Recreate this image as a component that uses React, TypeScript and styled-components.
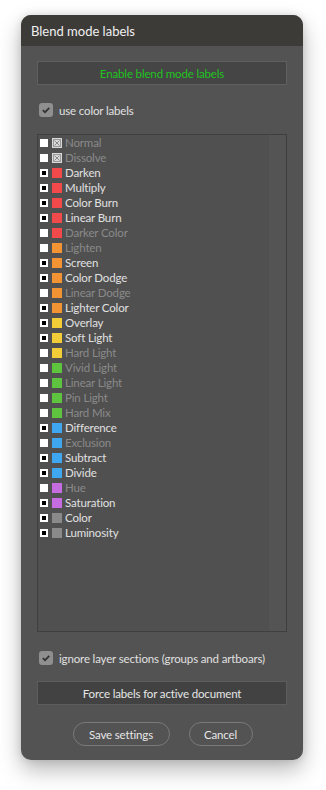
import React from "react";
import styled, { createGlobalStyle } from "styled-components";

const Global = createGlobalStyle`
  html, body { margin: 0; padding: 0; background: #ffffff; }
  body { font-family: Lato, "Open Sans", sans-serif; }
`;

const Page = styled.div`
  padding: 15px 0 30px 21px;
`;

const Dialog = styled.div`
  width: 282px;
  height: 745px;
  border-radius: 10px;
  background: #535353;
  box-shadow: 0 10px 22px rgba(0, 0, 0, 0.28), 0 0 8px rgba(0, 0, 0, 0.12);
  overflow: hidden;
  display: flex;
  flex-direction: column;
`;

const TitleBar = styled.div`
  height: 31px;
  background: #3d3b38;
  color: #f0f0f0;
  font-size: 13px;
  display: flex;
  align-items: center;
  padding-left: 10px;
  flex-shrink: 0;
`;

const Body = styled.div`
  padding: 15px 16px 0 16px;
  display: flex;
  flex-direction: column;
  white-space: nowrap;
  font-size: 11.5px;
  letter-spacing: -0.15px;
`;

const WideButton = styled.div<{ $green?: boolean; $mt?: number }>`
  height: 24px;
  margin-top: ${(p) => p.$mt ?? 0}px;
  box-sizing: border-box;
  border: 1px solid ${(p) => (p.$green ? "#5f5f5f" : "#5c5c5c")};
  background: ${(p) => (p.$green ? "#454545" : "#424242")};
  color: ${(p) => (p.$green ? "#1fc41f" : "#e6e6e6")};
  display: flex;
  align-items: center;
  justify-content: center;
`;

const CheckRow = styled.label<{ $mt: number }>`
  display: flex;
  align-items: center;
  gap: 6px;
  margin-top: ${(p) => p.$mt}px;
  margin-left: 2px;
  height: 14px;
  color: #e0e0e0;
`;

const CheckBox = styled.span`
  width: 14px;
  height: 14px;
  border-radius: 3px;
  background: #8f8f8f;
  display: flex;
  align-items: center;
  justify-content: center;
`;

const ListBox = styled.div`
  margin-top: 17px;
  height: 498px;
  box-sizing: border-box;
  border: 1px solid #3f3f3f;
  background: linear-gradient(to right, #505050 0%, #505050 93%, #545454 93%);
  padding: 0 0 0 1px;
`;

const Row = styled.div<{ $on: boolean }>`
  height: 15px;
  display: flex;
  align-items: center;
  color: ${(p) => (p.$on ? "#e0e0e0" : "#8a8a8a")};
  padding-left: 1px;
`;

const Tick = styled.span<{ $on: boolean }>`
  width: 8px;
  height: 8px;
  background: #ffffff;
  display: flex;
  align-items: center;
  justify-content: center;
  margin-right: 4px;
  &::after {
    content: "";
    width: 4px;
    height: 4px;
    background: ${(p) => (p.$on ? "#000000" : "transparent")};
  }
`;

const Swatch = styled.span<{ $c: string }>`
  width: 10px;
  height: 10px;
  background: ${(p) => p.$c};
  margin-right: 3px;
`;

const NoSwatch = styled.svg`
  width: 10px;
  height: 10px;
  margin-right: 3px;
`;

const PillRow = styled.div`
  display: flex;
  justify-content: center;
  gap: 19px;
  margin-top: 17px;
  padding-left: 1px;
`;

const Pill = styled.div<{ $w: number }>`
  width: ${(p) => p.$w}px;
  height: 24px;
  box-sizing: border-box;
  border: 1px solid #7a7a7a;
  border-radius: 12px;
  color: #e6e6e6;
  display: flex;
  align-items: center;
  justify-content: center;
`;

const RED = "#f24a4a";
const ORANGE = "#f39434";
const YELLOW = "#f3cd38";
const GREEN = "#5ec43f";
const BLUE = "#3fa7f0";
const VIOLET = "#c56ce0";
const GRAY = "#8a8a8a";

const modes: [string, string | null, boolean][] = [
  ["Normal", null, false],
  ["Dissolve", null, false],
  ["Darken", RED, true],
  ["Multiply", RED, true],
  ["Color Burn", RED, true],
  ["Linear Burn", RED, true],
  ["Darker Color", RED, false],
  ["Lighten", ORANGE, false],
  ["Screen", ORANGE, true],
  ["Color Dodge", ORANGE, true],
  ["Linear Dodge", ORANGE, false],
  ["Lighter Color", ORANGE, true],
  ["Overlay", YELLOW, true],
  ["Soft Light", YELLOW, true],
  ["Hard Light", YELLOW, false],
  ["Vivid Light", GREEN, false],
  ["Linear Light", GREEN, false],
  ["Pin Light", GREEN, false],
  ["Hard Mix", GREEN, false],
  ["Difference", BLUE, true],
  ["Exclusion", BLUE, false],
  ["Subtract", BLUE, true],
  ["Divide", BLUE, true],
  ["Hue", VIOLET, false],
  ["Saturation", VIOLET, true],
  ["Color", GRAY, true],
  ["Luminosity", GRAY, true],
];

const Check = () => (
  <CheckBox>
    <svg width="10" height="10" viewBox="0 0 10 10">
      <path d="M1.8 5.2 L4 7.2 L8.3 2.8" fill="none" stroke="#333" strokeWidth="1.7" />
    </svg>
  </CheckBox>
);

export default function App() {
  return (
    <>
      <Global />
      <Page>
        <Dialog>
          <TitleBar>Blend mode labels</TitleBar>
          <Body>
            <WideButton $green>Enable blend mode labels</WideButton>
            <CheckRow $mt={18}>
              <Check />
              use color labels
            </CheckRow>
            <ListBox>
              {modes.map(([name, color, on]) => (
                <Row key={name} $on={on}>
                  <Tick $on={on} />
                  {color ? (
                    <Swatch $c={color} />
                  ) : (
                    <NoSwatch viewBox="0 0 10 10">
                      <rect x="0" y="0" width="10" height="10" fill="#d9d9d9" />
                      <rect x="1.5" y="1.5" width="7" height="7" fill="none" stroke="#9a9a9a" strokeWidth="1" />
                      <path d="M2.5 2.5 L7.5 7.5 M7.5 2.5 L2.5 7.5" stroke="#8a8a8a" strokeWidth="1" />
                    </NoSwatch>
                  )}
                  {name}
                </Row>
              ))}
            </ListBox>
            <CheckRow $mt={19}>
              <Check />
              ignore layer sections (groups and artboars)
            </CheckRow>
            <WideButton $mt={16}>Force labels for active document</WideButton>
            <PillRow>
              <Pill $w={97}>Save settings</Pill>
              <Pill $w={64}>Cancel</Pill>
            </PillRow>
          </Body>
        </Dialog>
      </Page>
    </>
  );
}
